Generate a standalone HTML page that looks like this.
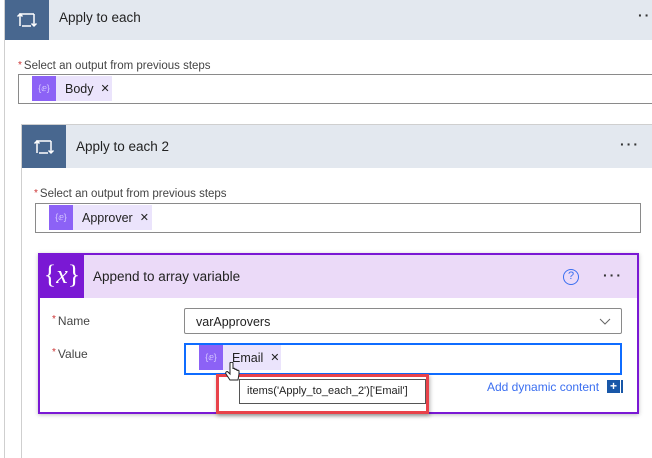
<!DOCTYPE html>
<html><head><meta charset="utf-8"><style>
*{box-sizing:border-box;margin:0;padding:0}
body{width:652px;height:458px;background:#fff;position:relative;overflow:hidden;font-family:"Liberation Sans",sans-serif;font-size:12px;color:#222}
.a{position:absolute}
.hdr{background:#e3e8ef}
.ib{background:#48678f}
.lab{font-size:11.5px;color:#444}
.lab b{color:#c33;font-weight:normal;font-size:10px;vertical-align:top;margin-right:2px}
.inp{border:1px solid #8a8a8a;background:#fff}
.tok{background:#ebe4fc;height:25px;display:flex;align-items:center;font-size:12.5px;color:#222}
.tok i{width:24px;height:25px;background:#8c62f6;display:inline-block;margin-right:9px;color:#d8ccff;font-size:9px;font-style:normal;text-align:center;line-height:25px}
.dots{font-size:14px;letter-spacing:2px;color:#333;font-weight:bold}
</style></head><body>
<div class="a" style="left:4px;top:0;width:1px;height:458px;background:#cfcfcf"></div>
<div class="a hdr" style="left:5px;top:0;width:647px;height:40px"></div>
<div class="a ib" style="left:5px;top:0;width:44px;height:40px"></div>
<svg class="a" style="left:16px;top:11px" width="22" height="18" viewBox="0 0 22 18" fill="none" stroke="#fff" stroke-width="1.5"><path d="M4 15V3h14"/><path d="M1.5 5.5L4 3l2.5 2.5"/><path d="M18 3v12"/><path d="M15.5 12.5L18 15l2.5-2.5"/><path d="M6 15h9"/></svg>
<div class="a" style="left:59px;top:10px;font-size:13.5px;color:#222">Apply to each</div>
<div class="a dots" style="left:638px;top:7px">··</div>
<div class="a lab" style="left:18px;top:60px"><b>*</b>Select an output from previous steps</div>
<div class="a inp" style="left:18px;top:74px;width:640px;height:30px"></div>
<div class="a tok" style="left:32px;top:76px;width:80px"><i>{ⅇ}</i>Body<span style="margin-left:7px;font-size:11px">✕</span></div>

<div class="a" style="left:21px;top:124px;width:1px;height:334px;background:#cfcfcf"></div>
<div class="a" style="left:21px;top:124px;width:631px;height:1px;background:#cfcfcf"></div>
<div class="a hdr" style="left:22px;top:125px;width:630px;height:43px"></div>
<div class="a ib" style="left:22px;top:125px;width:44px;height:43px"></div>
<svg class="a" style="left:33px;top:138px" width="22" height="18" viewBox="0 0 22 18" fill="none" stroke="#fff" stroke-width="1.5"><path d="M4 15V3h14"/><path d="M1.5 5.5L4 3l2.5 2.5"/><path d="M18 3v12"/><path d="M15.5 12.5L18 15l2.5-2.5"/><path d="M6 15h9"/></svg>
<div class="a" style="left:76px;top:139px;font-size:13.5px;color:#222">Apply to each 2</div>
<div class="a dots" style="left:620px;top:136px">···</div>
<div class="a lab" style="left:34px;top:188px"><b>*</b>Select an output from previous steps</div>
<div class="a inp" style="left:35px;top:203px;width:606px;height:30px"></div>
<div class="a tok" style="left:49px;top:205px;width:103px"><i>{ⅇ}</i>Approver<span style="margin-left:7px;font-size:11px">✕</span></div>

<div class="a" style="left:38px;top:253px;width:601px;height:161px;border:2px solid #7a18d4;box-shadow:0 1px 4px rgba(0,0,0,.25);background:#fff"></div>
<div class="a" style="left:40px;top:255px;width:597px;height:43px;background:#ebdaf8"></div>
<div class="a" style="left:40px;top:255px;width:44px;height:43px;background:#7a18d4;color:#fff;font-family:'Liberation Serif',serif;font-size:26px;text-align:center;line-height:40px"><span>{</span><i>x</i><span>}</span></div>
<div class="a" style="left:93px;top:269px;font-size:13.5px;color:#222">Append to array variable</div>
<div class="a" style="left:563px;top:269px;width:16px;height:16px;border:1.5px solid #3b6ff0;border-radius:50%;color:#3b6ff0;font-size:11px;text-align:center;line-height:13px">?</div>
<div class="a dots" style="left:603px;top:267px">···</div>
<div class="a lab" style="left:52px;top:314px;font-size:12px"><b>*</b>Name</div>
<div class="a inp" style="left:184px;top:308px;width:438px;height:26px;border-radius:2px"></div>
<div class="a" style="left:196px;top:315px;font-size:12.5px">varApprovers</div>
<svg class="a" style="left:599px;top:318px" width="12" height="8"><path d="M1 1l5 5 5-5" fill="none" stroke="#666" stroke-width="1"/></svg>
<div class="a lab" style="left:52px;top:347px;font-size:12px"><b>*</b>Value</div>
<div class="a" style="left:184px;top:343px;width:438px;height:32px;border:2px solid #0f6cff"></div>
<div class="a tok" style="left:199px;top:345px;width:82px;height:25px"><i>{ⅇ}</i>Email<span style="margin-left:7px;font-size:11px">✕</span></div>
<div class="a" style="left:487px;top:380px;color:#3b6ff0;font-size:12px">Add dynamic content</div>
<div class="a" style="left:607px;top:380px;width:13px;height:13px;background:#1857a8;color:#fff;font-size:12px;font-weight:bold;text-align:center;line-height:12px">+</div>
<div class="a" style="left:621px;top:380px;width:2px;height:13px;background:#1857a8"></div>
<div class="a" style="left:216px;top:374px;width:213px;height:40px;border:3px solid #e8424a;box-shadow:1px 2px 4px rgba(0,0,0,.3);background:#fff"></div>
<div class="a" style="left:239px;top:379px;width:187px;height:25px;border:1px solid #555;background:#fff;font-size:11px;line-height:23px;padding-left:7px;color:#222;white-space:nowrap">items('Apply_to_each_2')['Email']</div>
<svg class="a" style="left:225px;top:362px" width="16" height="20" viewBox="0 0 16 20"><path d="M5 1v11l-2-2c-1-1-3 0-2 2l4 6h8l1-6V9c0-1-2-1-2 0V8c0-1-2-1-2 0V7c0-1-2-1-2 0V1C8 0 5 0 5 1z" fill="#fff" stroke="#222" stroke-width="1"/></svg>
</body></html>
